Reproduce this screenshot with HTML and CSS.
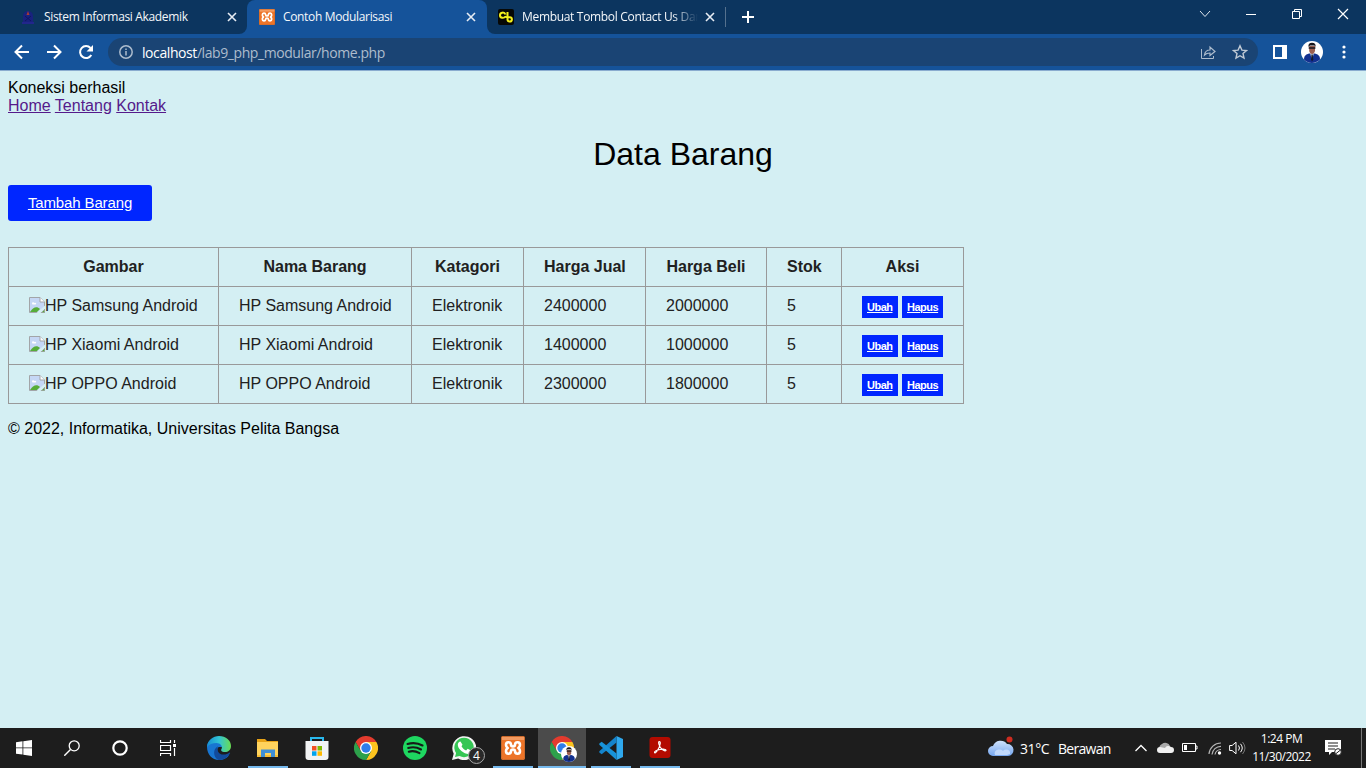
FILE: index.html
```html
<!DOCTYPE html>
<html lang="id">
<head>
<meta charset="utf-8">
<title>Contoh Modularisasi</title>
<link rel="stylesheet" href="styles.css">
</head>
<body>
<svg class="defs" width="0" height="0">
  <symbol id="x" viewBox="0 0 10 10"><path d="M1 1l8 8M9 1l-8 8" stroke="#e8edf4" stroke-width="1.6"/></symbol>
  <symbol id="xampp" viewBox="0 0 24 24"><rect width="24" height="24" rx="2" fill="#ed7428"/><rect x=".5" y=".5" width="23" height="23" rx="2" fill="none" stroke="#c96a2d"/><path d="M1 1h22v3H1z" fill="#f39a60"/><path d="M10 8.500C9.500 5.500 5 5.500 5 9c0 1.500.7 2.300 1.700 3C5.700 12.700 5 13.500 5 15c0 3.500 4.500 3.500 5 .5 0-1.500.8-2 2-2s2 .5 2 2c.5 3 5 3 5-.5 0-1.500-.7-2.300-1.700-3 1-.7 1.700-1.500 1.700-3 0-3.500-4.500-3.500-5-.5 0 1.500-.8 2-2 2s-2-.5-2-2z" fill="none" stroke="#fff" stroke-width="2.600" stroke-linejoin="round"/></symbol>
  <symbol id="chrome" viewBox="0 0 24 24"><path d="M1.600 6A12 12 0 0 1 22.400 6H12L6.800 15z" fill="#e33b2e"/><path d="M22.400 6A12 12 0 0 1 12 24L17.200 15 12 6z" fill="#fcc31e"/><path d="M12 24A12 12 0 0 1 1.600 6L6.800 15H17.200z" fill="#2da14b"/><circle cx="12" cy="12" r="6" fill="#fff"/><circle cx="12" cy="12" r="4.700" fill="#2f7de9"/></symbol>
  <symbol id="person" viewBox="0 0 22 22"><circle cx="11" cy="11" r="11" fill="#fff"/><path d="M3 18.500c0-4 2-5 5-6h6c3 1 5 2 5 6-4.500 4.600-12 4.600-16 0z" fill="#12308f"/><path d="M9 12h4l-2 7z" fill="#c8d3e2"/><path d="M10.500 13.500h1.200l.6 5-1.300 2-1-2z" fill="#15182c"/><path d="M8.200 5h5.800v5c-.7 2-1.500 3-2.900 3s-2.400-1-2.900-3z" fill="#9c5f50"/><path d="M7.500 6C7 3 8.500 1.800 11 1.800S15 3 14.500 6l-1-1.600H9z" fill="#15151b"/><path d="M7.700 7h6.700" stroke="#15151b" stroke-width="1.500"/></symbol>
  <symbol id="broken" viewBox="0 0 16 16"><path d="M.5 .5h10.500l4.500 4.500v10.500H.5z" fill="#c5d7f5" stroke="#a2a5a8"/><path d="M11 .5V5h4.500" fill="#fff" stroke="#a2a5a8"/><path d="M3 6.500c0-1.500 2-1.700 2.300-.5C7 5 8 7 6.500 7.500h-3z" fill="#fff"/><path d="M1 15c3-5 7-6 10-3l-3 3z" fill="#56ad39"/><path d="M7.500 16L16 8.500v3L11.500 16z" fill="#d5eff3"/><path d="M12.500 15.500l3-3v3z" fill="#56ad39" stroke="#a2a5a8" stroke-width=".6"/></symbol>
</svg>

<header class="tabstrip">
  <div class="tab first">
    <svg class="fav" viewBox="0 0 16 16"><path d="M3 13V7a5 5 0 0 1 10 0v6z" fill="#19227f"/><path d="M2 14h12" stroke="#22268c" stroke-width="2"/><path d="M8 2l1.500 4h-3z" fill="#a83a35"/><path d="M5 7l6 5M11 7l-6 5" stroke="#101763"/></svg>
    <span class="title t1">Sistem Informasi Akademik</span>
    <svg class="close"><use href="#x"/></svg>
  </div>
  <div class="tab active">
    <svg class="fav"><use href="#xampp"/></svg>
    <span class="title t2">Contoh Modularisasi</span>
    <svg class="close"><use href="#x"/></svg>
  </div>
  <div class="tab last">
    <svg class="fav" viewBox="0 0 16 16"><rect width="16" height="16" rx="2" fill="#070805"/><path d="M7.500 5.500C6.500 2.800 2 3 2 6.200S6 9.500 7.500 7.500M9.500 3v7.500a2.200 2.200 0 1 0 2.200-2.300c-2 0-3 .5-4.700-.7" fill="none" stroke="#f4f11b" stroke-width="2"/></svg>
    <span class="title t3">Membuat Tombol Contact Us Dan</span>
    <svg class="close"><use href="#x"/></svg>
  </div>
  <svg class="plus" viewBox="0 0 12 12"><path d="M6 0v12M0 6h12" stroke="#fff" stroke-width="2"/></svg>
  <div class="window-controls">
    <svg width="12" height="12"><path d="M1 3l5 5.500L11 3" fill="none" stroke="#dfe6ee"/></svg>
    <svg width="12" height="12"><path d="M1 6.500h10" stroke="#fff"/></svg>
    <svg width="12" height="12"><path d="M1.500 3.500h7v7h-7zM3.500 3.500v-2h7v7h-2" fill="none" stroke="#fff"/></svg>
    <svg width="12" height="12"><path d="M1 1l10 10M11 1L1 11" stroke="#fff" stroke-width="1.200"/></svg>
  </div>
</header>

<nav class="toolbar">
  <svg class="nav-icon" viewBox="0 0 16 16"><path d="M15 8H2M8 1.500L1.500 8 8 14.500" fill="none" stroke="#fff" stroke-width="2"/></svg>
  <svg class="nav-icon" viewBox="0 0 16 16"><path d="M1 8h13M8 1.500L14.500 8 8 14.500" fill="none" stroke="#fff" stroke-width="2"/></svg>
  <svg class="nav-icon" viewBox="0 0 16 16"><path d="M13.300 11A6 6 0 1 1 12.500 4" fill="none" stroke="#fff" stroke-width="2"/><path d="M15 1v6.500H8.500z" fill="#fff"/></svg>
  <div class="omnibox">
    <svg width="14" height="14" viewBox="0 0 14 14"><circle cx="7" cy="7" r="6.200" fill="none" stroke="#adbccd" stroke-width="1.500"/><path d="M7 6v4.500M7 3.500v1.500" stroke="#adbccd" stroke-width="1.500"/></svg>
    <span class="url"><b>localhost</b>/lab9_php_modular/home.php</span>
    <svg class="share" width="16" height="16" viewBox="0 0 16 16"><path d="M1.500 5v9.500h12V12" fill="none" stroke="#adbccd"/><path d="M4.500 11c.5-3.500 2.500-5 5.500-5V3l5 4.500-5 4V9c-2.500 0-4 .5-5.500 2z" fill="none" stroke="#adbccd" stroke-width="1.200"/></svg>
    <svg width="16" height="16" viewBox="0 0 16 16"><path d="M8 1.800l1.900 4.300 4.600.4-3.500 3 1 4.600L8 11.700 4 14.100l1-4.600-3.500-3 4.600-.4z" fill="none" stroke="#c0cad5" stroke-width="1.400"/></svg>
  </div>
  <svg class="panel" viewBox="0 0 14 14"><path d="M1 1h12v12H1z" fill="none" stroke="#fff" stroke-width="2"/><path d="M9 1h4v12H9z" fill="#fff"/></svg>
  <svg class="avatar"><use href="#person"/></svg>
  <svg class="dots" viewBox="0 0 4 14"><g fill="#fff"><circle cx="2" cy="2" r="1.600"/><circle cx="2" cy="7" r="1.600"/><circle cx="2" cy="12" r="1.600"/></g></svg>
</nav>

<main class="page">
  <div>Koneksi berhasil</div>
  <div class="links"><a href="#">Home</a> <a href="#">Tentang</a> <a href="#">Kontak</a></div>
  <h1>Data Barang</h1>
  <a class="add" href="#">Tambah Barang</a>
  <table>
    <colgroup><col class="c1"><col class="c2"><col class="c3"><col class="c4"><col class="c5"><col class="c6"><col class="c7"></colgroup>
    <tr><th>Gambar</th><th>Nama Barang</th><th>Katagori</th><th>Harga Jual</th><th>Harga Beli</th><th>Stok</th><th>Aksi</th></tr>
    <tr><td><svg class="broken"><use href="#broken"/></svg>HP Samsung Android</td><td>HP Samsung Android</td><td>Elektronik</td><td>2400000</td><td>2000000</td><td>5</td><td class="actions"><div><a href="#">Ubah</a><a href="#">Hapus</a></div></td></tr>
    <tr><td><svg class="broken"><use href="#broken"/></svg>HP Xiaomi Android</td><td>HP Xiaomi Android</td><td>Elektronik</td><td>1400000</td><td>1000000</td><td>5</td><td class="actions"><div><a href="#">Ubah</a><a href="#">Hapus</a></div></td></tr>
    <tr><td><svg class="broken"><use href="#broken"/></svg>HP OPPO Android</td><td>HP OPPO Android</td><td>Elektronik</td><td>2300000</td><td>1800000</td><td>5</td><td class="actions"><div><a href="#">Ubah</a><a href="#">Hapus</a></div></td></tr>
  </table>
  <p class="copyright">© 2022, Informatika, Universitas Pelita Bangsa</p>
</main>

<footer class="taskbar">
  <div class="system">
    <span><svg width="16" height="16" viewBox="0 0 16 16"><path d="M0 2.300L6.500 1.300v6.200H0zM7.300 1.200L16 0v7.500H7.300zM0 8.300h6.500v6.300L0 13.700zM7.300 8.300H16V16l-8.700-1.200z" fill="#fff"/></svg></span>
    <span><svg width="16" height="16" viewBox="0 0 16 16"><circle cx="10.200" cy="5.800" r="5" fill="none" stroke="#fff" stroke-width="1.300"/><path d="M6.500 9.500L.3 15.700" stroke="#fff" stroke-width="1.400"/></svg></span>
    <span><svg width="16" height="16" viewBox="0 0 16 16"><circle cx="8" cy="8" r="6.700" fill="none" stroke="#fff" stroke-width="2.200"/></svg></span>
    <span><svg width="16" height="16" viewBox="0 0 16 16"><path d="M.5 0v2.500h10V0M.5 16v-2.500h10V16M.5 5.500h10v5H.5zM14.500 0v3M14.500 8v8" fill="none" stroke="#fff" stroke-width="1.200"/><path d="M13 4h3v3h-3z" fill="#fff"/></svg></span>
  </div>
  <div class="apps">
    <span><svg viewBox="0 0 24 24"><defs><linearGradient id="edge-top" x2="1"><stop stop-color="#168ed4"/><stop offset=".5" stop-color="#32c4d5"/><stop offset="1" stop-color="#69dc52"/></linearGradient></defs><path d="M0 11C0 5 5 2 9 4c5 1 7 4 6 7l-3 0c-3 1-2 7 2 9 3 1 6 0 8-1-2 3.500-6 5-10 5C5 24 0 18 0 11z" fill="#1876d2"/><path d="M0 11C.5 4 6 0 12 0c7 0 12 4.500 12 10 0 4-3 6-6 6-3.500 0-4.500-1.500-3.500-3C16 10 13 7 9.500 7 5.500 7 2 8.500 0 11z" fill="url(#edge-top)"/><path d="M11 10.300c-1.500 4 .500 7.700 5 8.200 2.500.3 4.500-.8 6.300-1.800.8-.3 1 .3.700.8C20 22 16 24.300 11.500 24 6 21.500 5.500 13 11 10.300z" fill="#124b9c"/></svg></span>
    <span class="open"><svg viewBox="0 0 24 24"><path d="M1 3h8l2 2h11v4H1z" fill="#e8a317"/><path d="M1 6h21v15H1z" fill="#ffd35d"/><path d="M1 19h21v2H1z" fill="#f9bd32"/><path d="M5 13.500h14V21h-4v-4H9v4H5z" fill="#408fd5"/></svg></span>
    <span><svg viewBox="0 0 24 24"><path d="M6 5V2h12v3" fill="none" stroke="#29b8ed" stroke-width="2"/><path d="M.5 5h23v16a3 3 0 0 1-3 3h-17a3 3 0 0 1-3-3z" fill="#f2f3f4"/><path d="M7 10h4.500v4.500H7z" fill="#f25022"/><path d="M12.500 10H17v4.500h-4.500z" fill="#7fba00"/><path d="M7 15.300h4.500v4.500H7z" fill="#00a4ef"/><path d="M12.500 15.300H17v4.500h-4.500z" fill="#ffb900"/></svg></span>
    <span><svg><use href="#chrome"/></svg></span>
    <span><svg viewBox="0 0 24 24"><circle cx="12" cy="12" r="12" fill="#1ed760"/><path d="M4.500 8c5-1.500 10.500-1 15 1.500M5.200 12c4.300-1.300 9-.7 12.800 1.500M5.800 15.700c3.500-1 7.300-.5 10.700 1.400" fill="none" stroke="#171b18" stroke-width="2.100" stroke-linecap="round"/></svg></span>
    <span class="badge-holder"><svg viewBox="0 0 24 24"><path d="M0 24l1.700-6.200A12 12 0 1 1 6.200 22.500z" fill="#f3f4f3"/><path d="M3 21l1.100-4A9.700 9.700 0 1 1 7.500 20z" fill="#35c654"/><path d="M8.500 5.500l2 3.300-1 1.500c1 2 2.500 3.300 4.600 4.200l1.600-1.700 3.300 1.700c0 2.500-2 3.700-4.200 3.300-5-1.200-9-5.500-9-9.300 0-1.500 1.200-3 2.700-3z" fill="#fff"/></svg><i class="badge">4</i></span>
    <span class="open"><svg><use href="#xampp"/></svg></span>
    <span class="current badge-holder"><svg><use href="#chrome"/></svg><svg class="profile"><use href="#person"/></svg></span>
    <span class="open"><svg viewBox="0 0 24 24"><path d="M17.500 0L24 3v18l-6.500 3z" fill="#2fa8ed"/><path d="M17.500 0v6.500L2.700 18.300.3 16.500v-1.200z" fill="#1484cc"/><path d="M17.500 24v-6.500L2.700 5.700.3 7.500v1.200z" fill="#1893d9"/></svg></span>
    <span class="open"><svg viewBox="0 0 24 24"><rect x="1.500" y="1" width="21" height="21" rx="3" fill="#b30b00"/><path d="M11.300 5.500c1.700 0 1 4-1.300 8-1.500 2.700-3 4-3.500 3-.4-1 2.500-2.500 5.500-3 3.500-.6 6-.3 6 .7 0 1.300-2.500.4-4.500-1.400-2.300-2.100-3.700-7.300-2.200-7.300z" fill="none" stroke="#fff" stroke-width="1.200"/></svg></span>
  </div>
  <div class="tray">
    <svg width="26" height="22" viewBox="0 0 26 22"><defs><linearGradient id="cloud" y2="1" x2="0"><stop stop-color="#cfe2fc"/><stop offset="1" stop-color="#75a6ef"/></linearGradient></defs><path d="M5 20a5 5 0 0 1 0-10 8 8 0 0 1 14-2 6 6 0 0 1 1 12z" fill="url(#cloud)"/><path d="M7 19c-2-5 5-7 8-4 3-3 8-1 7 3l-3 1z" fill="#c0d8fb"/><circle cx="21.500" cy="3.500" r="3" fill="#cf2c20"/></svg>
    <span class="weather temp">31°C</span><span class="weather sky">Berawan</span>
    <svg class="caret" width="12" height="8"><path d="M.5 7L6 1.500 11.500 7" fill="none" stroke="#fff" stroke-width="1.300"/></svg>
    <svg class="onedrive" width="18" height="12" viewBox="0 0 18 12"><path d="M3 8a4 4 0 0 1 2-6 5 5 0 0 1 8 2l-5 6z" fill="#a9a9a9"/><path d="M3 11a3 3 0 0 1 0-6l5 1a4 4 0 0 1 6-1 3 3 0 0 1 0 6z" fill="#f0f0f0"/></svg>
    <svg class="battery" width="16" height="10"><path d="M.5.5h13v8H.5zM13.500 3h1.500v3h-1.500" fill="none" stroke="#fff"/><path d="M2 2h3v5H2z" fill="#fff"/></svg>
    <svg class="wifi" width="14" height="14" viewBox="0 0 14 14"><g fill="none" stroke="#b5b5b5" stroke-width="1.200"><path d="M1 13A12 12 0 0 1 13 2M4 13.500A9 9 0 0 1 13 5.300M7 13.500A6 6 0 0 1 13 8.500"/></g><circle cx="11.500" cy="12" r="1.700" fill="#fff"/></svg>
    <svg class="volume" width="17" height="14" viewBox="0 0 17 14"><path d="M.6 4.500h2.500L7 1.200v11.600L3.100 9.500H.6zM9.500 4.500q2 2.500 0 5M11.500 2.800q3.500 4.200 0 8.400" fill="none" stroke="#fff"/><path d="M13.500 1q5 6 0 12" fill="none" stroke="#777"/></svg>
    <div class="clock"><span class="time">1:24 PM</span><span class="date">11/30/2022</span></div>
    <svg class="notice" width="17" height="16" viewBox="0 0 17 16"><path d="M0 0h16v12H7l-3 3v-3H0z" fill="#fff"/><path d="M3 3h10M3 6h10M3 9h7" stroke="#202020" stroke-width="1.200"/><circle cx="13" cy="12" r="3.300" fill="#fff" stroke="#222"/><path d="M10.500 14l5-4" stroke="#222"/></svg>
  </div>
</footer>
</body>
</html>
```
FILE: styles.css
```css
* { box-sizing: border-box; }
body { margin: 0; width: 1366px; height: 768px; display: flex; flex-direction: column; overflow: hidden; background: #d4eff3; font-family: "Liberation Sans", Arial, sans-serif; }
svg { display: block; flex: none; }
.defs { position: absolute; }

.tabstrip { flex: none; height: 34px; display: flex; align-items: stretch; background: linear-gradient(#15539a, #15539a) 235px 22px / 264px 12px no-repeat #0c355f; color: #f4f7fa; font: 12px "Open Sans", sans-serif; }
.tab { width: 240px; display: flex; align-items: center; padding: 0 12px 0 11px; background: #0c355f; }
.first { width: 247px; padding-left: 20px; padding-right: 10px; border-bottom-right-radius: 8px; }
.active { background: #15539a; border-radius: 8px 8px 0 0; padding-left: 12px; padding-right: 11px; }
.last { border-bottom-left-radius: 8px; background: linear-gradient(#55718e, #55718e) 238px 7px / 1px 20px no-repeat #0c355f; }
.fav { width: 16px; height: 16px; }
.title { flex: 1; margin-left: 8px; white-space: nowrap; overflow: hidden; line-height: 18px; letter-spacing: -.34px; }
.t3 { letter-spacing: -.32px; flex: none; width: 176px; margin-right: 6px; -webkit-mask-image: linear-gradient(90deg, #000 150px, transparent 176px); mask-image: linear-gradient(90deg, #000 150px, transparent 176px); }
.close { width: 10px; height: 10px; }
.t3 + .close { margin-left: 1px; }
.plus { width: 12px; height: 12px; margin: 11px 0 0 15px; }
.window-controls { margin-left: auto; display: flex; gap: 34px; padding: 8px 17px 0 0; }

.toolbar { flex: none; height: 37px; display: flex; align-items: center; padding-left: 14px; background: #15539a; border-bottom: 1px solid #8aaccf; }
.nav-icon { width: 16px; height: 16px; margin-right: 16px; }
.omnibox { width: 1150px; height: 28px; margin-left: -2px; border-radius: 14px; background: #1a4474; display: flex; align-items: center; padding: 0 10px 0 11px; }
.url { margin-left: 9px; font: 14px "Open Sans", sans-serif; color: #adbccd; letter-spacing: -.42px; white-space: nowrap; }
.url b { color: #fff; font-weight: 400; }
.share { margin-left: auto; margin-right: 16px; }
.panel { width: 14px; height: 14px; margin-left: 15px; }
.avatar { width: 22px; height: 22px; margin-left: 14px; }
.dots { width: 4px; height: 14px; margin-left: 19px; }

.page { flex: 1; padding: 8px; color: #000; font-size: 16px; line-height: 18px; }
.page a { text-decoration: underline; }
.links a { color: #551a8b; }
h1 { margin: 21px 0 12px; font-size: 32px; line-height: 37px; font-weight: 400; text-align: center; }
.page .add { display: block; width: 144px; height: 36px; border-radius: 3px; background: #0026ff; color: #fff; font-size: 15px; line-height: 36px; letter-spacing: -.13px; text-align: center; }
table { table-layout: fixed; width: 956px; margin-top: 26px; border-collapse: collapse; color: #212121; }
.c1 { width: 210px; } .c2 { width: 193px; } .c3 { width: 112px; } .c4 { width: 122px; } .c5 { width: 121px; } .c6 { width: 75px; } .c7 { width: 122px; }
tr { height: 39px; }
th, td { border: 1px solid #999; padding: 0 20px; height: 39px; line-height: 18px; text-align: left; white-space: nowrap; }
th { text-align: center; }
.broken { display: inline-block; width: 16px; height: 16px; vertical-align: -2px; }
.actions div { display: flex; gap: 4px; padding-top: 1px; }
.actions a { width: 36px; height: 22px; padding-left: 5px; background: #0026ff; color: #fff; font-size: 11px; font-weight: 700; line-height: 23px; letter-spacing: -.5px; }
.actions a + a { width: 41px; }
.copyright { margin: 16px 0 0; }

.taskbar { flex: none; height: 40px; display: flex; background: #1d1d1d; color: #fff; font-family: "Open Sans", sans-serif; }
.system { display: flex; margin-right: 3px; }
.system span, .apps span { width: 48px; height: 40px; display: flex; align-items: center; justify-content: center; }
.apps { display: flex; gap: 1px; }
.apps span { position: relative; }
.apps svg { width: 24px; height: 24px; }
.open { background: linear-gradient(#76b9ed, #76b9ed) 4px 38px / 40px 2px no-repeat; }
.current { background: #4b4b4b; border-bottom: 2px solid #76b9ed; padding-top: 2px; }
.badge { position: absolute; left: 28px; top: 19px; width: 17px; height: 17px; border: 1px solid #a7a7a7; border-radius: 50%; background: #292929; font-size: 12px; font-style: normal; line-height: 15px; text-align: center; }
.apps .profile { position: absolute; left: 23px; top: 18px; width: 16px; height: 16px; }
.tray { margin-left: auto; display: flex; align-items: center; background: linear-gradient(#777, #777) 373px 0 / 1px 40px no-repeat; width: 378px; }
.tray > svg:first-child { margin-bottom: 3px; }
.weather { font-size: 14px; white-space: nowrap; letter-spacing: -.7px; }
.temp { width: 29px; margin-left: 6px; letter-spacing: -.4px; }
.sky { width: 53px; margin-left: 9px; }
.caret { margin-left: 24px; }
.onedrive { margin-left: 10px; }
.battery { margin-left: 7px; }
.wifi { margin-left: 10px; }
.volume { margin-left: 7px; }
.clock { width: 59px; margin-left: 6px; display: flex; flex-direction: column; align-items: center; font-size: 12px; line-height: 18px; letter-spacing: -.5px; white-space: nowrap; }
.notice { margin-left: 14px; }
```
